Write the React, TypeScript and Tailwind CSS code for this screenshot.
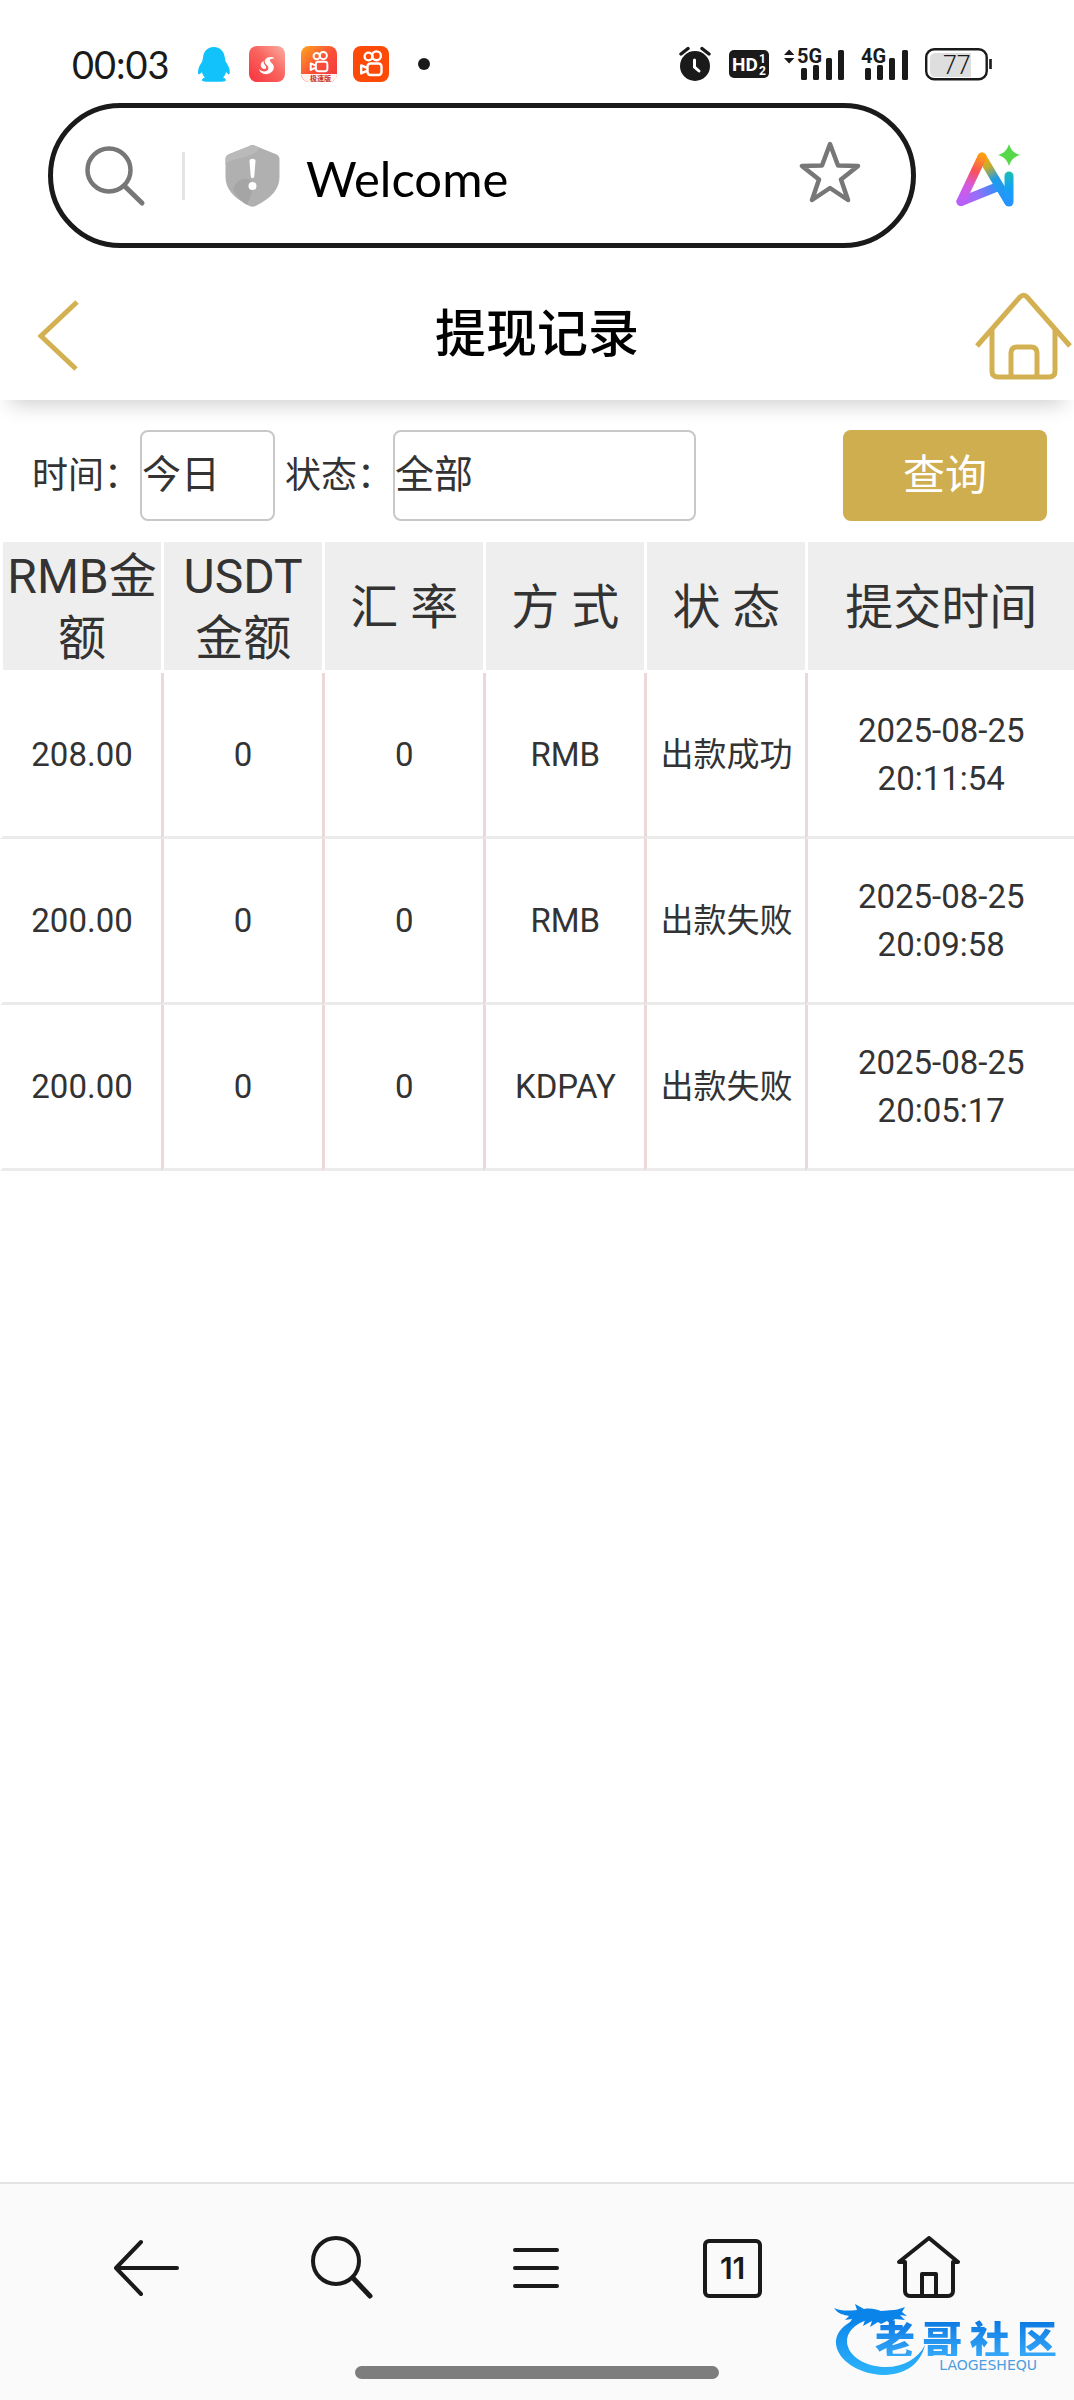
import { useState } from 'react';

const records = [
  { amount: '208.00', usdt: '0', rate: '0', method: 'RMB', status: '出款成功', date: '2025-08-25', time: '20:11:54' },
  { amount: '200.00', usdt: '0', rate: '0', method: 'RMB', status: '出款失败', date: '2025-08-25', time: '20:09:58' },
  { amount: '200.00', usdt: '0', rate: '0', method: 'KDPAY', status: '出款失败', date: '2025-08-25', time: '20:05:17' },
];

const columns = ['RMB金额', 'USDT金额', '汇 率', '方 式', '状 态', '提交时间'];

function KuaishouMark() {
  return (
    <g fill="none" stroke="#fff" strokeWidth="2.4" strokeLinejoin="round">
      <circle cx="15.5" cy="10.5" r="3.9" />
      <circle cx="23.5" cy="9.8" r="4.4" />
      <rect x="14.5" y="17.5" width="14" height="11.5" rx="3" />
      <path d="M14.5 22.2l-6.3-2.8v8l6.3-2.8" />
    </g>
  );
}

function StatusBar() {
  return (
    <div className="flex h-[103px] items-center justify-between pt-6 pr-[82px] pl-[72px]">
      <div className="flex items-center">
        <span className="w-[125px] font-['Lato',sans-serif] text-[38px] leading-9 text-[#1a1a1a]">00:03</span>
        <div className="flex items-center gap-4">
          <svg className="h-9 w-9" viewBox="0 0 36 36" fill="#12c2fb">
            <path d="M16.800 1C10.600 1 6.500 5.500 6 11.500l-.8 4C3 18.500 1 22.500 1 26c0 1.800.6 2.600 1.500 2.200.9-.4 1.800-1.300 2.400-2.200.6 2.200 1.600 4 3 5.400-2 .7-3 1.600-3 2.700 0 1.300 1.500 1.700 4.500 1.700h15c3 0 4.500-.4 4.500-1.700 0-1.100-1-2-2.800-2.700 1.400-1.400 2.400-3.200 3-5.400.6.900 1.400 1.800 2.200 2.200.9.400 1.500-.4 1.500-2.200 0-3.500-2-7.500-4.200-10.500l-.8-4C27.200 5.500 23 1 16.800 1z" />
          </svg>
          <svg className="h-9 w-9" viewBox="0 0 36 36">
            <defs>
              <linearGradient id="novel" x1="0" y1="1" x2="1" y2="0">
                <stop offset="0" stopColor="#f8323c" />
                <stop offset=".55" stopColor="#f86660" />
                <stop offset="1" stopColor="#fbb0a2" />
              </linearGradient>
            </defs>
            <rect width="36" height="36" rx="8" fill="url(#novel)" />
            <path d="M25.500 12.500c-2-2.200-8-2-9.500 1.500-1.200 3 2 4.700 3 6.500.9 1.700.3 3.700-1.500 4.500-2.400 1-5.500.2-7.500-2 .7 3.600 4.500 5.800 8.500 5 4.800-1 7.300-5 6-8.500-.8-2.200-3.200-3.200-3.500-4.800-.3-1.600 1.800-2.500 4.500-2.200z" fill="#fff" />
            <path d="M14.500 15c-3.500 2-3.600 5.500-.8 7.500 1.200.9 2.600.8 3.300-.2.800-1.300-.5-2.400-1.300-3.600-.6-.9-1.200-2-1.200-3.700z" fill="#fff" />
          </svg>
          <svg className="h-9 w-9" viewBox="0 0 36 36">
            <defs>
              <linearGradient id="lite" x1="0" y1="0" x2="1" y2="1">
                <stop offset="0" stopColor="#ffa51d" />
                <stop offset=".5" stopColor="#fb4f38" />
                <stop offset="1" stopColor="#f0353f" />
              </linearGradient>
            </defs>
            <rect width="36" height="36" rx="8" fill="url(#lite)" />
            <g transform="translate(3 1.500) scale(.82)">
              <KuaishouMark />
            </g>
            <path d="M0 28h36c0 5-3 7-7 8H8c-4 0-7-3-8-8z" fill="#fff3ec" />
            <text x="9" y="35" fontSize="7" fontWeight="700" fill="#c9302c" fontFamily="Noto Sans CJK SC, sans-serif">极速版</text>
          </svg>
          <svg className="h-9 w-9" viewBox="0 0 36 36">
            <rect width="36" height="36" rx="8" fill="#fe4a08" />
            <KuaishouMark />
          </svg>
        </div>
        <span className="ml-[29px] h-3 w-3 rounded-full bg-[#1a1a1a]" />
      </div>

      <div className="flex items-center">
        <svg className="h-9 w-8" viewBox="0 0 32 36">
          <circle cx="16" cy="20" r="15" fill="#1a1a1a" />
          <path d="M2 8l7-5.500M30 8l-7-5.500" stroke="#1a1a1a" strokeWidth="3.400" strokeLinecap="round" />
          <path d="M15.500 14v7l4.500 4" fill="none" stroke="#fff" strokeWidth="3" strokeLinecap="round" />
        </svg>
        <svg className="ml-[18px] h-7 w-10" viewBox="0 0 40 28" fontFamily="Roboto, sans-serif" fill="#fff" fontWeight="700">
          <rect width="40" height="28" rx="5" fill="#1a1a1a" />
          <text x="3" y="21" fontSize="19">HD</text>
          <text x="30" y="13" fontSize="12">1</text>
          <text x="30" y="25" fontSize="12">2</text>
        </svg>
        <svg className="ml-[15px] h-9 w-[61px] overflow-visible" viewBox="0 0 61 36" fill="#1a1a1a" fontFamily="Roboto, sans-serif" fontWeight="700">
          <path d="M0 9l5.200-5.500L10.400 9zM0 12h10.400l-5.200 5.500z" />
          <text x="13" y="17" fontSize="20">5G</text>
          <rect x="17" y="22" width="6" height="12" rx="1.500" />
          <rect x="29" y="19" width="6" height="15" rx="1.500" />
          <rect x="42" y="12" width="6" height="22" rx="1.500" />
          <rect x="54" y="4" width="6" height="30" rx="1.500" />
        </svg>
        <svg className="ml-[16px] h-9 w-[48px] overflow-visible" viewBox="0 0 48 36" fill="#1a1a1a" fontFamily="Roboto, sans-serif" fontWeight="700">
          <text x="0" y="17" fontSize="20">4G</text>
          <rect x="4" y="22" width="6" height="12" rx="1.500" />
          <rect x="16" y="19" width="6" height="15" rx="1.500" />
          <rect x="28" y="12" width="6" height="22" rx="1.500" />
          <rect x="41" y="4" width="6" height="30" rx="1.500" />
        </svg>
        <svg className="ml-[16px] h-9 w-[67px]" viewBox="0 0 67 36" fontFamily="Roboto, sans-serif" fontWeight="300">
          <path d="M11 7h35v24H11c-4 0-6-2-6-6V13c0-4 2-6 6-6z" fill="#dedede" />
          <rect x="1.200" y="3.200" width="60.500" height="30" rx="8" fill="none" stroke="#1a1a1a" strokeWidth="2.400" />
          <path d="M65.500 13v10" stroke="#1a1a1a" strokeWidth="2.600" />
          <text x="18" y="28" fontSize="25" fill="#1a1a1a">77</text>
        </svg>
      </div>
    </div>
  );
}

function AddressBar() {
  return (
    <div className="flex items-center gap-10 pr-[54px] pl-12">
      <div className="flex h-[145px] flex-1 items-center rounded-full border-[5px] border-[#1a1a1a] pr-[50px] pl-8">
        <button type="button" aria-label="搜索">
          <svg className="h-[62px] w-[62px]" viewBox="0 0 62 62" fill="none" stroke="#777" strokeWidth="4.500" strokeLinecap="round">
            <circle cx="24" cy="25" r="21.500" />
            <path d="M39.500 41L57 58" strokeWidth="5" />
          </svg>
        </button>
        <span className="ml-[35px] h-12 w-[3px] bg-[#e4e4e4]" />
        <svg className="ml-10 h-[62px] w-[55px]" viewBox="0 0 55 62">
          <path d="M27.500 0c1 0 2 .5 3 1l20 8c2.500 1 4 2.500 4 5v18c0 12-8 21-24 29-2 1-4 1-6 0C8.500 53 .5 44 .5 32V14c0-2.500 1.500-4 4-5l20-8c1-.5 2-1 3-1z" fill="#b0b0b0" />
          <path d="M27.500 0c1 0 2 .5 3 1l4 1.600c-2 7-14 9-25 12C5 16 2 17 .5 20v-6c0-2.500 1.500-4 4-5l20-8c1-.5 2-1 3-1z" fill="#bababa" />
          <path d="M8 45c3-11 11-13 17-10 4 3 3 12-3 25C16 56 11 51 8 45z" fill="#a5a5a5" />
          <path d="M24.500 16c0-3 6-3 6 0l-1.200 15c-.3 3-3.300 3-3.600 0z" fill="#fff" />
          <circle cx="27.500" cy="41" r="4" fill="#fff" />
        </svg>
        <span className="ml-[26px] flex-1 pt-1 font-['Lato',sans-serif] text-[49px] leading-[60px] text-black">Welcome</span>
        <button type="button" aria-label="收藏">
          <svg className="h-[70px] w-[62px]" viewBox="0 0 62 70" fill="none" stroke="#777" strokeWidth="4.500" strokeLinejoin="round">
            <path d="M31 3l8 21.500 20 .5-17 13.500L49 59 31 47 13 59l7-20.500L3 25l20-.5z" />
          </svg>
        </button>
      </div>
      <button type="button" aria-label="AI">
        <svg className="h-[66px] w-16" viewBox="0 0 64 66" fill="none" strokeLinecap="round" strokeLinejoin="round">
          <defs>
            <linearGradient id="aiLeft" x1="26" y1="12" x2="8" y2="60" gradientUnits="userSpaceOnUse">
              <stop offset="0" stopColor="#ff9f10" />
              <stop offset=".35" stopColor="#f8505c" />
              <stop offset=".65" stopColor="#d45ae0" />
              <stop offset="1" stopColor="#b860fa" />
            </linearGradient>
            <linearGradient id="aiBase" x1="4" y1="60" x2="42" y2="44" gradientUnits="userSpaceOnUse">
              <stop offset="0" stopColor="#c05cf4" />
              <stop offset=".5" stopColor="#9270fa" />
              <stop offset="1" stopColor="#2a90fb" />
            </linearGradient>
            <linearGradient id="aiRight" x1="26" y1="12" x2="52" y2="60" gradientUnits="userSpaceOnUse">
              <stop offset="0" stopColor="#ffa80c" />
              <stop offset=".25" stopColor="#bfae30" />
              <stop offset=".5" stopColor="#1f9be8" />
              <stop offset="1" stopColor="#2594ff" />
            </linearGradient>
            <linearGradient id="aiStem" x1="52" y1="28" x2="52" y2="60" gradientUnits="userSpaceOnUse">
              <stop offset="0" stopColor="#1cbfae" />
              <stop offset=".5" stopColor="#12a4f4" />
              <stop offset="1" stopColor="#2594ff" />
            </linearGradient>
          </defs>
          <path d="M5 58.500L41 44" stroke="url(#aiBase)" strokeWidth="9" />
          <path d="M26 14L52.500 58.500" stroke="url(#aiRight)" strokeWidth="9" />
          <path d="M26 14L5 58.500" stroke="url(#aiLeft)" strokeWidth="9" />
          <path d="M53 33v26" stroke="url(#aiStem)" strokeWidth="9" />
          <path d="M53 1c2 6 4.500 9 11 11-6.500 2-9 5-11 11-2-6-4.500-9-11-11 6.500-2 9-5 11-11z" fill="#55d94b" />
        </svg>
      </button>
    </div>
  );
}

function Watermark() {
  return (
    <div className="absolute right-[17px] bottom-6 flex h-[74px] w-[224px] flex-col items-end">
      <svg className="absolute inset-0 h-full w-full" viewBox="0 0 224 74">
        <defs>
          <linearGradient id="dragon" x1="0" y1="0" x2="0" y2="1">
            <stop offset="0" stopColor="#0b84ea" />
            <stop offset="1" stopColor="#2db4fb" />
          </linearGradient>
        </defs>
        <path d="M36 13C14 18 2 29 3 42c2 17 23 30 47 31 20 0 37-9 42-30-7 14-22 22-39 22-20 0-37-10-39-24-1-10 7-20 24-24z" fill="url(#dragon)" />
        <path d="M1 6c7 3 13 3 23 2l-2-6 9 5c6-1 12 0 17 2l12-1c4 0 6-1 12-3l-3 5 5 4-7-1 5 5-10-1-5 4-3-2-6 3-3-2-8 5 2-6-9 5 2-6c-8 3-12 4-18 8l5-9-7 1 4-4C11 13 5 12 1 6z" fill="#0b84ea" />
      </svg>
      <span className="relative mt-[18px] flex w-[182px] justify-between bg-linear-to-b from-[#0a78e2] to-[#35a8f8] bg-clip-text font-['Noto_Sans_CJK_SC',sans-serif] text-[40px] leading-9 font-black text-transparent">
        <span>老</span>
        <span>哥</span>
        <span>社</span>
        <span>区</span>
      </span>
      <span className="relative pr-5 font-['DejaVu_Sans',sans-serif] text-[14px] leading-[18px] text-[#4c9ee0]">LAOGESHEQU</span>
    </div>
  );
}

function BottomNav() {
  return (
    <nav className="relative border-t-2 border-[#e3e3e3] bg-[#fafafa]">
      <div className="flex h-[168px] items-center px-12 text-[#1a1a1a]">
        <button type="button" aria-label="后退" className="flex flex-1 justify-center">
          <svg className="h-16 w-[66px]" viewBox="0 0 66 64" fill="none" stroke="currentColor" strokeWidth="4" strokeLinecap="round" strokeLinejoin="round">
            <path d="M28 6L3 32l25 26M3 32h61" />
          </svg>
        </button>
        <button type="button" aria-label="搜索" className="flex flex-1 justify-center">
          <svg className="h-16 w-16" viewBox="0 0 64 64" fill="none" stroke="currentColor" strokeWidth="4" strokeLinecap="round">
            <circle cx="27" cy="25" r="23" />
            <path d="M44 42l17 18" strokeWidth="5" />
          </svg>
        </button>
        <button type="button" aria-label="菜单" className="flex flex-1 justify-center">
          <svg className="h-16 w-12" viewBox="0 0 48 64" stroke="currentColor" strokeWidth="4" strokeLinecap="round">
            <path d="M2 14h42M2 32h42M2 50h42" />
          </svg>
        </button>
        <button type="button" aria-label="标签页" className="flex flex-1 justify-center">
          <span className="flex h-[59px] w-[59px] items-center justify-center rounded-md border-4 border-current font-['Inter',sans-serif] text-[30px] leading-9 font-semibold">
            11
          </span>
        </button>
        <button type="button" aria-label="主页" className="flex flex-1 justify-center">
          <svg className="h-16 w-16" viewBox="0 0 64 64" fill="none" stroke="currentColor" strokeWidth="4" strokeLinecap="round" strokeLinejoin="round">
            <path d="M9 26H3L33 2l29 24h-5v29c0 3-2 5-5 5H14c-3 0-5-2-5-5z" />
            <path d="M26 60V38h14v22" />
          </svg>
        </button>
      </div>
      <div className="flex justify-center pt-[14px] pb-[21px]">
        <span className="h-[13px] w-[364px] rounded-full bg-[#7d7d7d]" />
      </div>
      <Watermark />
    </nav>
  );
}

export default function App() {
  const [range, setRange] = useState('today');
  const [status, setStatus] = useState('all');

  return (
    <div className="flex min-h-screen flex-col bg-white font-['Roboto','Noto_Sans_CJK_SC',sans-serif] text-[#333]">
      <StatusBar />
      <AddressBar />

      <header className="flex h-[152px] items-center justify-between pt-[22px] pr-[2px] pl-[37px] shadow-[0_14px_20px_-10px_rgba(0,0,0,0.2)]">
        <a href="#back" aria-label="返回" className="w-[62px]">
          <svg className="h-[72px] w-[42px]" viewBox="0 0 42 72" fill="none" stroke="#d3b153" strokeWidth="5">
            <path d="M40 3L4 37l35 33" />
          </svg>
        </a>
        <h1 className="text-[51px] leading-[60px] font-medium text-black">提现记录</h1>
        <a href="#home" aria-label="首页">
          <svg className="h-[90px] w-[97px]" viewBox="0 0 97 90" fill="none" stroke="#d3b153" strokeWidth="5" strokeLinejoin="round">
            <path d="M2 56L45 7c2.500-2.500 5-2.500 7 0l43 49" />
            <path d="M17 38v43c0 4 2 6 6 6h51c4 0 6-2 6-6V38" />
            <path d="M36 87V63c0-4 2-6 6-6h14c4 0 6 2 6 6v24" />
          </svg>
        </a>
      </header>

      <form className="flex items-center py-[30px] pr-[27px] pl-8 text-[36px]" onSubmit={(e) => e.preventDefault()}>
        <label htmlFor="range" className="shrink-0">时间：</label>
        <select
          id="range"
          value={range}
          onChange={(e) => setRange(e.target.value)}
          className="h-[91px] w-[135px] appearance-none rounded-lg border-2 border-[#c8c8c8] bg-white text-[39px]"
        >
          <option value="today">今日</option>
          <option value="yesterday">昨日</option>
        </select>
        <label htmlFor="status" className="ml-2.5 shrink-0">状态：</label>
        <select
          id="status"
          value={status}
          onChange={(e) => setStatus(e.target.value)}
          className="h-[91px] max-w-[303px] flex-1 appearance-none rounded-lg border-2 border-[#c8c8c8] bg-white text-[39px]"
        >
          <option value="all">全部</option>
          <option value="success">出款成功</option>
          <option value="failed">出款失败</option>
        </select>
        <button type="submit" className="ml-auto h-[91px] w-[204px] rounded-lg bg-[#cfae50] text-[42px] text-white">
          查询
        </button>
      </form>

      <table className="mt-[-9px] w-full table-fixed border-separate border-spacing-0 text-center">
        <colgroup>
          <col className="w-[15%]" />
          <col className="w-[15%]" />
          <col className="w-[15%]" />
          <col className="w-[15%]" />
          <col className="w-[15%]" />
          <col />
        </colgroup>
        <thead>
          <tr className="h-[131px]">
            {columns.map((name) => (
              <th key={name} className="border-b-[3px] border-l-[3px] border-white bg-[#eee] pt-1 text-[48px] leading-[62px] font-normal">
                {name}
              </th>
            ))}
          </tr>
        </thead>
        <tbody className="text-[33px] leading-[48px]">
          {records.map((r) => (
            <tr key={r.time} className="h-[166px] [&>td]:border-b-[3px] [&>td]:border-l-[3px] [&>td]:border-b-[#ebebeb] [&>td]:border-l-[#ecd8d8] [&>td:first-child]:border-l-white">
              <td>{r.amount}</td>
              <td>{r.usdt}</td>
              <td>{r.rate}</td>
              <td>{r.method}</td>
              <td>{r.status}</td>
              <td>
                {r.date}
                <br />
                {r.time}
              </td>
            </tr>
          ))}
        </tbody>
      </table>

      <div className="flex-1" />
      <BottomNav />
    </div>
  );
}
